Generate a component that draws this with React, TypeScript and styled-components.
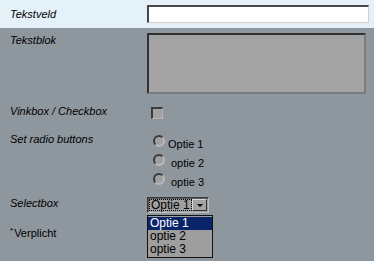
import React from 'react';
import styled, { createGlobalStyle } from 'styled-components';

const Global = createGlobalStyle`
  html, body {
    margin: 0;
    padding: 0;
    background: #8f979e;
    font-family: "Liberation Sans", Arial, sans-serif;
  }
`;

const Page = styled.div`
  width: 374px;
  height: 261px;
  background: #8f979e;
  overflow: hidden;
`;

const TopBand = styled.div`
  display: grid;
  grid-template-columns: 147px 222px;
  align-items: center;
  height: 28px;
  background: #e4f1f9;
`;

const Row = styled.div<{ $top: number; $height?: number }>`
  display: grid;
  grid-template-columns: 147px 1fr;
  align-items: start;
  margin-top: ${p => p.$top}px;
  height: ${p => (p.$height ? `${p.$height}px` : 'auto')};
`;

const Label = styled.div<{ $italic?: boolean }>`
  padding-left: 10px;
  font-size: 11px;
  line-height: 13px;
  font-style: ${p => (p.$italic === false ? 'normal' : 'italic')};
  color: #000;
`;

const Sup = styled.span`
  font-size: 8px;
  vertical-align: 4px;
  margin-right: 1px;
`;

const TextInput = styled.input`
  box-sizing: border-box;
  width: 222px;
  height: 18px;
  margin: 0;
  padding: 1px 3px;
  background: #fff;
  border-top: 2px solid #484848;
  border-left: 2px solid #484848;
  border-bottom: 1px solid #d4d0c8;
  border-right: 1px solid #d4d0c8;
  outline: none;
  font: 11px "Liberation Sans", Arial, sans-serif;
`;

const TextArea = styled.textarea`
  box-sizing: border-box;
  width: 219px;
  height: 61px;
  margin: 0;
  resize: none;
  background: #a3a3a3;
  border-top: 2px solid #303030;
  border-left: 2px solid #303030;
  border-bottom: 2px solid #7c7c7c;
  border-right: 2px solid #7c7c7c;
  outline: none;
  font: 11px "Liberation Sans", Arial, sans-serif;
`;

const CheckBox = styled.span`
  box-sizing: border-box;
  display: block;
  width: 12px;
  height: 12px;
  margin: 2px 0 0 4px;
  background: #a3a3a3;
  border-top: 2px solid #3c3c3c;
  border-left: 2px solid #3c3c3c;
  border-bottom: 1px solid #b4b4b4;
  border-right: 1px solid #b4b4b4;
`;

const RadioList = styled.div`
  display: flex;
  flex-direction: column;
  gap: 7px;
  padding: 2px 0 0 6px;
`;

const RadioItem = styled.label`
  display: flex;
  align-items: flex-start;
  height: 12px;
`;

const RadioDot = styled.span`
  box-sizing: border-box;
  display: block;
  width: 12px;
  height: 12px;
  border-radius: 50%;
  background: #a0a0a0;
  border: 2px solid;
  border-color: #3a3a3a #b8b8b8 #b8b8b8 #3a3a3a;
`;

const RadioText = styled.span<{ $indent: number }>`
  margin-left: ${p => p.$indent}px;
  margin-top: 3px;
  font-size: 11px;
  line-height: 13px;
  white-space: nowrap;
`;

const SelectWrap = styled.div`
  position: relative;
  width: 62px;
  height: 16px;
`;

const SelectBox = styled.div`
  box-sizing: border-box;
  display: flex;
  align-items: stretch;
  width: 62px;
  height: 16px;
  background: #a0a0a0;
  border-top: 1px solid #3a3a3a;
  border-left: 1px solid #3a3a3a;
  border-bottom: 1px solid #c0c0c0;
  border-right: 1px solid #c0c0c0;
  box-shadow: inset 1px 1px 0 #5a5a5a;
`;

const SelectValue = styled.span`
  flex: 1;
  display: flex;
  align-items: center;
  margin: 1px 0 1px 1px;
  padding-left: 1px;
  border: 1px dotted #000;
  font-size: 12px;
  line-height: 10px;
  color: #000;
  white-space: nowrap;
`;

const ArrowButton = styled.span`
  box-sizing: border-box;
  width: 15px;
  margin: 1px 1px 1px 0;
  display: flex;
  align-items: center;
  justify-content: center;
  background: #a3a3a3;
  border-top: 1px solid #d8d8d8;
  border-left: 1px solid #d8d8d8;
  border-bottom: 1px solid #303030;
  border-right: 1px solid #303030;

  &::after {
    content: '';
    border-left: 3px solid transparent;
    border-right: 3px solid transparent;
    border-top: 3px solid #000;
    margin-top: 1px;
  }
`;

const ListBox = styled.ul`
  position: absolute;
  left: 0;
  top: 18px;
  box-sizing: border-box;
  width: 66px;
  margin: 0;
  padding: 1px 0;
  list-style: none;
  background: #9e9e9e;
  border: 1px solid #101010;
`;

const Option = styled.li<{ $active?: boolean }>`
  height: 13px;
  padding-left: 2px;
  font-size: 12px;
  line-height: 13px;
  background: ${p => (p.$active ? '#0a246a' : 'transparent')};
  color: ${p => (p.$active ? '#fff' : '#000')};
`;

export default function App() {
  return (
    <Page>
      <Global />
      <TopBand>
        <Label>Tekstveld</Label>
        <TextInput type="text" />
      </TopBand>

      <Row $top={5} $height={61}>
        <Label style={{ marginTop: 1 }}>Tekstblok</Label>
        <TextArea />
      </Row>

      <Row $top={11}>
        <Label>Vinkbox / Checkbox</Label>
        <CheckBox />
      </Row>

      <Row $top={14}>
        <Label>Set radio buttons</Label>
        <RadioList>
          <RadioItem>
            <RadioDot />
            <RadioText $indent={3}>Optie 1</RadioText>
          </RadioItem>
          <RadioItem>
            <RadioDot />
            <RadioText $indent={6}>optie 2</RadioText>
          </RadioItem>
          <RadioItem>
            <RadioDot />
            <RadioText $indent={6}>optie 3</RadioText>
          </RadioItem>
        </RadioList>
      </Row>

      <Row $top={12}>
        <Label>Selectbox</Label>
        <SelectWrap>
          <SelectBox>
            <SelectValue>Optie 1</SelectValue>
            <ArrowButton />
          </SelectBox>
          <ListBox>
            <Option $active>Optie 1</Option>
            <Option>optie 2</Option>
            <Option>optie 3</Option>
          </ListBox>
        </SelectWrap>
      </Row>

      <Row $top={11}>
        <Label $italic={false}>
          <Sup>*</Sup>Verplicht
        </Label>
      </Row>
    </Page>
  );
}
